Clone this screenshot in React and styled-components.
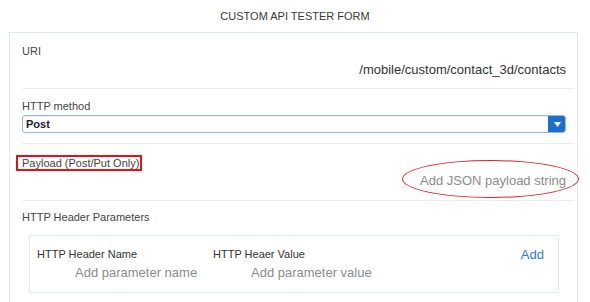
import styled, { createGlobalStyle } from 'styled-components';

const GlobalStyle = createGlobalStyle`
    body{
        margin: 0;
        background-color: #ffffff;
        font-family: 'Liberation Sans', Arial, sans-serif;
    }
`

export default function App() {
    return (
        <Page>
            <GlobalStyle />
            <Title>Custom API Tester Form</Title>
            <Panel>
                <Row $pad="11px 8px 10px 0">
                    <Label>URI</Label>
                    <Value>/mobile/custom/contact_3d/contacts</Value>
                </Row>
                <Row $pad="10px 8px 10px 0">
                    <Label>HTTP method</Label>
                    <Select>
                        <span>Post</span>
                        <Arrow>
                            <svg width="7" height="5" viewBox="0 0 7 5">
                                <path d="M0 0 H7 L3.5 5 Z" fill="#ffffff" />
                            </svg>
                        </Arrow>
                    </Select>
                </Row>
                <Row $pad="10px 8px 11px 0">
                    <Label $marked>Payload (Post/Put Only)</Label>
                    <Value $placeholder>
                        <Circled>Add JSON payload string</Circled>
                    </Value>
                </Row>
                <Row $pad="9px 8px 0 0" $last>
                    <Label>HTTP Header Parameters</Label>
                    <HeaderBox>
                        <HeaderCol $width="176px">
                            <SmallLabel>HTTP Header Name</SmallLabel>
                            <Placeholder>Add parameter name</Placeholder>
                        </HeaderCol>
                        <HeaderCol>
                            <SmallLabel>HTTP Heaer Value</SmallLabel>
                            <Placeholder>Add parameter value</Placeholder>
                        </HeaderCol>
                        <AddLink>Add</AddLink>
                    </HeaderBox>
                </Row>
            </Panel>
        </Page>
    )
}

const Page = styled.div`
    width: 590px;
    height: 302px;
    overflow: hidden;
`
const Title = styled.div`
    height: 32px;
    display: flex;
    align-items: center;
    justify-content: center;
    font-size: 11px;
    text-transform: uppercase;
    color: #3a3a3a;
`
const Panel = styled.div`
    margin-left: 9px;
    width: 569px;
    height: 300px;
    box-sizing: border-box;
    border: 1px solid #e4e9ee;
    padding: 0 3px 0 12px;
`
const Row = styled.div`
    display: flex;
    flex-direction: column;
    box-sizing: border-box;
    padding: ${p => p.$pad};
    border-bottom: ${p => p.$last ? 'none' : '1px solid #e8ecf0'};
`
const Label = styled.div`
    align-self: flex-start;
    font-size: 11px;
    line-height: 14px;
    color: #444444;
    ${p => p.$marked && `
        border: 2px solid #e0141b;
        padding: 0 1px 0 4px;
        margin: 1px 0 0 -6px;
        line-height: 12px;
    `}
`
const Value = styled.div`
    align-self: flex-end;
    margin-top: ${p => p.$placeholder ? '2px' : '4px'};
    font-size: 13px;
    line-height: 16px;
    color: ${p => p.$placeholder ? '#8c8c8c' : '#333333'};
`
const Circled = styled.span`
    position: relative;
    &::after{
        content: '';
        position: absolute;
        left: -18px;
        right: -13px;
        top: -13px;
        bottom: -10px;
        border: 1.5px solid #d8232a;
        border-radius: 50%;
    }
`
const Select = styled.div`
    margin-top: 2px;
    height: 18px;
    box-sizing: border-box;
    display: flex;
    align-items: center;
    justify-content: space-between;
    border: 1px solid #8dbbea;
    border-radius: 3px;
    box-shadow: inset 0 1px 1px rgba(0, 0, 0, 0.08);
    overflow: hidden;
    span{
        padding-left: 3px;
        font-size: 11px;
        font-weight: 700;
        color: #222222;
    }
`
const Arrow = styled.div`
    width: 18px;
    height: 18px;
    margin-right: -1px;
    background-color: #1a6fcf;
    display: flex;
    align-items: center;
    justify-content: center;
    border-radius: 0 3px 3px 0;
`
const HeaderBox = styled.div`
    margin: 11px 0 0 7px;
    width: 530px;
    height: 58px;
    box-sizing: border-box;
    border: 1px solid #e4e9ee;
    padding: 11px 14px 0 7px;
    display: flex;
    align-items: flex-start;
`
const HeaderCol = styled.div`
    width: ${p => p.$width || 'auto'};
    flex: ${p => p.$width ? 'none' : '1'};
    display: flex;
    flex-direction: column;
`
const SmallLabel = styled.div`
    font-size: 11px;
    line-height: 14px;
    color: #333333;
`
const Placeholder = styled.div`
    margin-top: 4px;
    padding-left: 38px;
    font-size: 13px;
    line-height: 16px;
    color: #8c8c8c;
`
const AddLink = styled.div`
    font-size: 13px;
    line-height: 16px;
    color: #2a7fd6;
    cursor: pointer;
`
